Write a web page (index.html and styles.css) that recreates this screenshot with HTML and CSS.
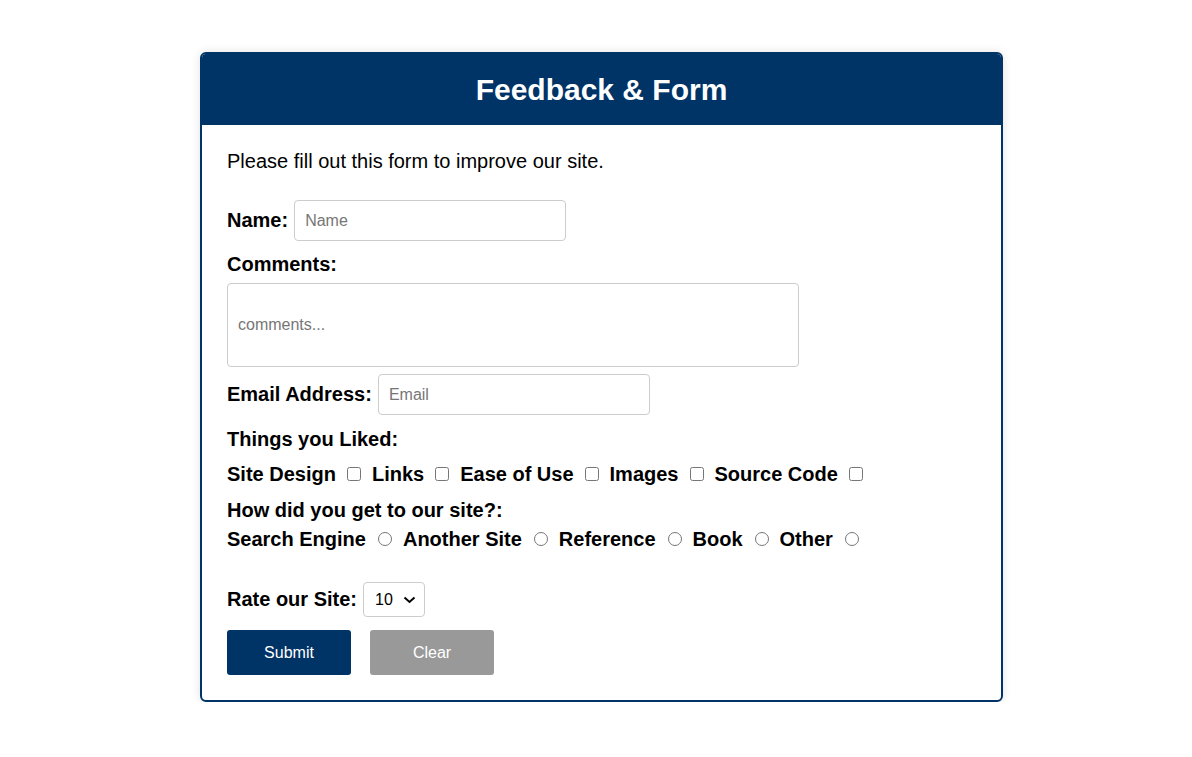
FILE: index.html
```html
<!DOCTYPE html>
<html>
<head>
<meta charset="utf-8">
<link rel="stylesheet" href="styles.css">
</head>
<body>
<div class="card">
  <div class="card-header">Feedback &amp; Form</div>
  <form class="card-body">
    <p class="intro">Please fill out this form to improve our site.</p>
    <div class="row row-name">
      <label class="lbl" for="name">Name:</label>
      <input class="field" id="name" type="text" placeholder="Name">
    </div>
    <div class="lbl block lbl-comments">Comments:</div>
    <input class="field comments" type="text" placeholder="comments...">
    <div class="row row-email">
      <label class="lbl" for="email">Email Address:</label>
      <input class="field" id="email" type="text" placeholder="Email">
    </div>
    <div class="lbl block lbl-liked">Things you Liked:</div>
    <div class="choices choices-liked">
      <span class="lbl">Site Design</span><input type="checkbox" class="box">
      <span class="lbl">Links</span><input type="checkbox" class="box">
      <span class="lbl">Ease of Use</span><input type="checkbox" class="box">
      <span class="lbl">Images</span><input type="checkbox" class="box">
      <span class="lbl">Source Code</span><input type="checkbox" class="box">
    </div>
    <div class="lbl block lbl-how">How did you get to our site?:</div>
    <div class="choices choices-how">
      <span class="lbl">Search Engine</span><input type="radio" name="how" class="radio">
      <span class="lbl">Another Site</span><input type="radio" name="how" class="radio">
      <span class="lbl">Reference</span><input type="radio" name="how" class="radio">
      <span class="lbl">Book</span><input type="radio" name="how" class="radio">
      <span class="lbl">Other</span><input type="radio" name="how" class="radio">
    </div>
    <div class="row row-rate">
      <label class="lbl" for="rate">Rate our Site:</label>
      <span class="select-wrap">
        <select id="rate" class="select">
          <option>10</option>
        </select>
        <svg class="chev" width="13" height="8" viewBox="0 0 13 8"><path d="M1.5 1.5 L6.5 6 L11.5 1.5" fill="none" stroke="#000" stroke-width="2"/></svg>
      </span>
    </div>
    <div class="buttons">
      <button type="button" class="btn btn-submit">Submit</button>
      <button type="button" class="btn btn-clear">Clear</button>
    </div>
  </form>
</div>
</body>
</html>
```

FILE: styles.css
```css
html, body {
  margin: 0;
  padding: 0;
  background: #fff;
}
body {
  font-family: "Liberation Sans", Arial, sans-serif;
  color: #000;
  padding-top: 52px;
}
.card {
  width: 799px;
  margin-left: 200px;
  border: 2px solid #003366;
  border-radius: 6px;
  overflow: hidden;
  box-shadow: 0 0 10px rgba(0, 0, 0, 0.12);
  background: #fff;
}
.card-header {
  background: #003366;
  color: #fff;
  font-weight: bold;
  font-size: 30px;
  line-height: 35px;
  padding: 18px 0;
  text-align: center;
}
.card-body {
  display: flex;
  flex-direction: column;
  align-items: flex-start;
  padding: 25px 25px 25px 25px;
}
.intro {
  margin: 0 0 27px;
  font-size: 20px;
  line-height: 23px;
}
.lbl {
  font-size: 20px;
  font-weight: bold;
  line-height: 23px;
}
.row {
  display: flex;
  align-items: center;
  gap: 6px;
}
.row-name { margin-bottom: 12px; }
.lbl-comments { margin-bottom: 7px; }
.row-email { margin-bottom: 13px; }
.lbl-liked { margin-bottom: 12px; }
.choices-liked { margin-bottom: 13px; }
.lbl-how { margin-bottom: 6px; }
.choices-how { margin-bottom: 31px; }
.row-rate { margin-bottom: 13px; }

.field {
  box-sizing: border-box;
  width: 272px;
  height: 41px;
  border: 1px solid #cccccc;
  border-radius: 4px;
  padding: 0 10px;
  font-family: "Liberation Sans", Arial, sans-serif;
  font-size: 16px;
  color: #000;
  background: #fff;
  margin: 0;
  outline: none;
}
.field::placeholder {
  color: #767676;
}
.comments {
  width: 572px;
  height: 84px;
  margin-bottom: 7px;
}
.choices {
  display: flex;
  align-items: center;
  height: 23px;
}
.box {
  margin: -2px 11px 0 11px;
  width: 14px;
  height: 14px;
  flex: none;
}
.radio {
  margin: -1px 11px 0 12px;
  width: 14px;
  height: 14px;
  flex: none;
}
.select-wrap {
  position: relative;
  display: inline-block;
}
.select {
  -webkit-appearance: none;
  appearance: none;
  box-sizing: border-box;
  width: 62px;
  height: 35px;
  border: 1px solid #cccccc;
  border-radius: 4px;
  background: #fff;
  padding: 0 0 0 11px;
  font-family: "Liberation Sans", Arial, sans-serif;
  font-size: 16px;
  color: #000;
  margin: 0;
}
.chev {
  position: absolute;
  left: 40px;
  top: 14px;
  pointer-events: none;
}
.buttons {
  display: flex;
  gap: 19px;
}
.btn {
  width: 124px;
  height: 45px;
  border: none;
  border-radius: 3px;
  color: #fff;
  font-family: "Liberation Sans", Arial, sans-serif;
  font-size: 16px;
  padding: 0;
  margin: 0;
}
.btn-submit { background: #003366; }
.btn-clear { background: #999999; }
```
